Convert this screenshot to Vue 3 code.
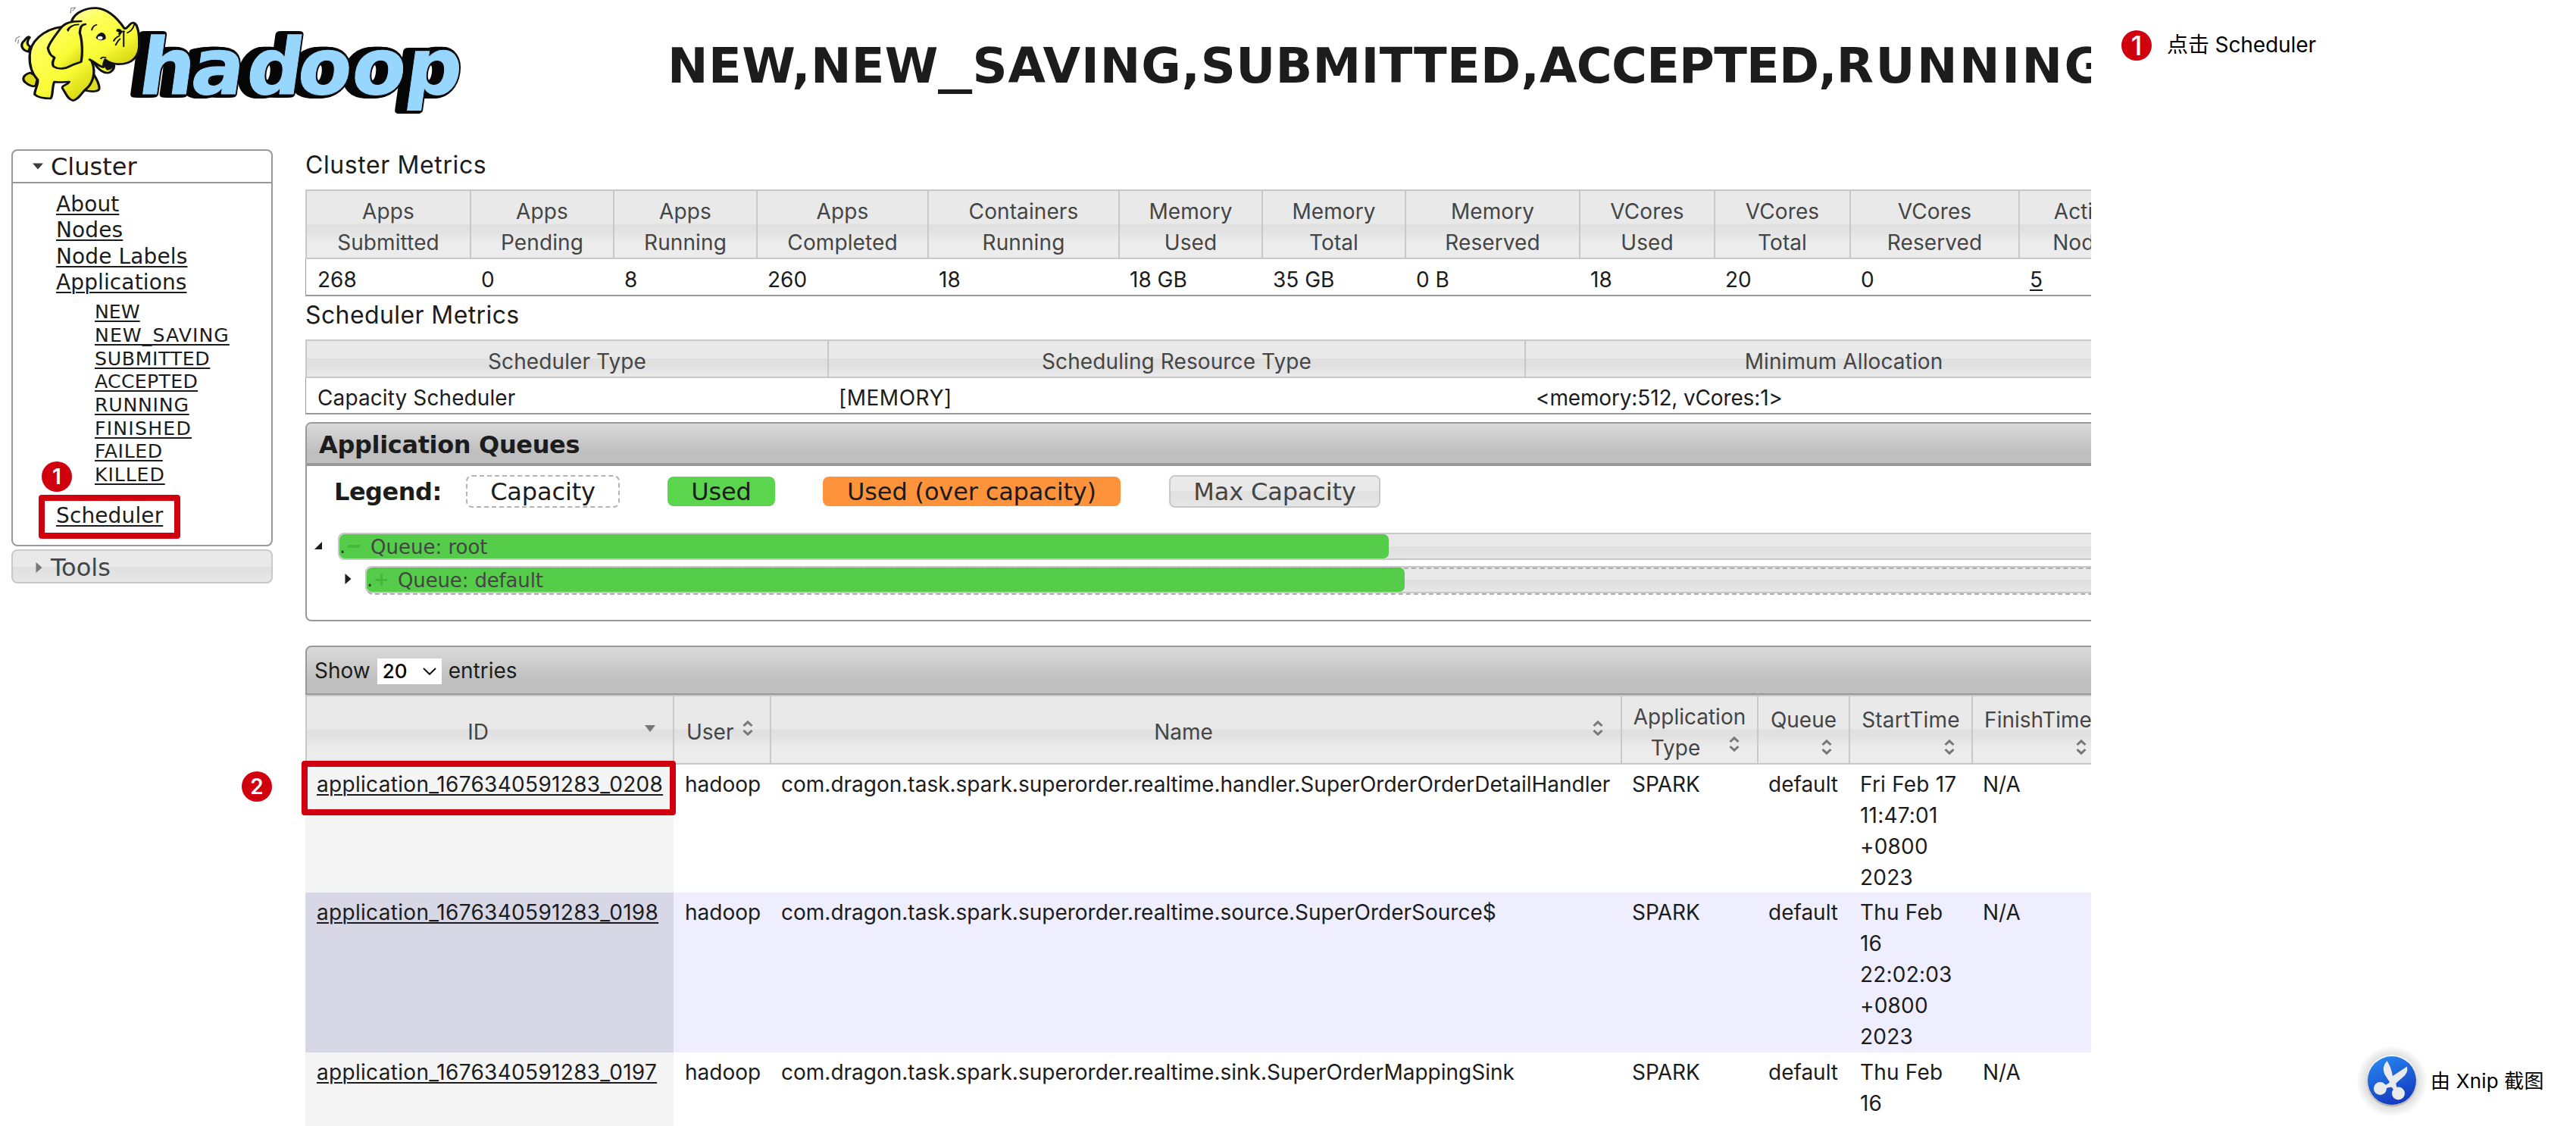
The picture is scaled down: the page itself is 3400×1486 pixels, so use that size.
<script setup>
const titleParts = [
  { text: 'NEW,', spacing: 0.5 },
  { text: 'NEW', spacing: 0.2 },
  { text: '_', spacing: 0, wide: true },
  { text: 'SAVING,', spacing: 0.9 },
  { text: 'SUBMITTED,', spacing: 0.3 },
  { text: 'ACCEPTED,', spacing: -0.8 },
  { text: 'RUNNING', spacing: 2.5 },
]

const clusterLinks = ['About', 'Nodes', 'Node Labels', 'Applications']

const stateLinks = [
  { label: 'NEW', spacing: 0 },
  { label: 'NEW_SAVING', spacing: 1.05 },
  { label: 'SUBMITTED', spacing: 0.65 },
  { label: 'ACCEPTED', spacing: 0.3 },
  { label: 'RUNNING', spacing: 0.75 },
  { label: 'FINISHED', spacing: 1.2 },
  { label: 'FAILED', spacing: 0.6 },
  { label: 'KILLED', spacing: 0.9 },
]

const metrics = [
  { head: ['Apps', 'Submitted'], value: '268', width: 217 },
  { head: ['Apps', 'Pending'], value: '0', width: 189 },
  { head: ['Apps', 'Running'], value: '8', width: 189 },
  { head: ['Apps', 'Completed'], value: '260', width: 226 },
  { head: ['Containers', 'Running'], value: '18', width: 252 },
  { head: ['Memory', 'Used'], value: '18 GB', width: 189 },
  { head: ['Memory', 'Total'], value: '35 GB', width: 189 },
  { head: ['Memory', 'Reserved'], value: '0 B', width: 230 },
  { head: ['VCores', 'Used'], value: '18', width: 178 },
  { head: ['VCores', 'Total'], value: '20', width: 179 },
  { head: ['VCores', 'Reserved'], value: '0', width: 223 },
  { head: ['Active', 'Nodes'], value: '5', width: 175, link: true },
]

const scheduler = [
  { head: 'Scheduler Type', value: 'Capacity Scheduler', width: 689, spacing: 0.1 },
  { head: 'Scheduling Resource Type', value: '[MEMORY]', width: 920, spacing: 0.5 },
  { head: 'Minimum Allocation', value: '<memory:512, vCores:1>', width: 841, spacing: -0.15 },
]

const apps = [
  {
    id: 'application_1676340591283_0208',
    name: 'com.dragon.task.spark.superorder.realtime.handler.SuperOrderOrderDetailHandler',
    start: ['Fri Feb 17', '11:47:01', '+0800', '2023'],
    height: 169,
  },
  {
    id: 'application_1676340591283_0198',
    name: 'com.dragon.task.spark.superorder.realtime.source.SuperOrderSource$',
    start: ['Thu Feb', '16', '22:02:03', '+0800', '2023'],
    height: 211,
  },
  {
    id: 'application_1676340591283_0197',
    name: 'com.dragon.task.spark.superorder.realtime.sink.SuperOrderMappingSink',
    start: ['Thu Feb', '16'],
    height: 211,
  },
]
</script>

<template>
  <div class="page">
    <div class="shot">
      <header class="top">
        <svg class="logo" width="640" height="160" viewBox="0 0 1568 480" preserveAspectRatio="none">
          <defs>
            <linearGradient id="skin" x1="0" y1="0" x2="0.7" y2="1">
              <stop offset="0" stop-color="#ffffb0" />
              <stop offset="0.3" stop-color="#fdff58" />
              <stop offset="0.7" stop-color="#f8fc36" />
              <stop offset="1" stop-color="#d8d614" />
            </linearGradient>
          </defs>
          <g transform="scale(2.45 3)">
            <g transform="translate(0 124.3) skewX(-8)" class="wordmark">
              <text v-for="n in 6" :key="n" class="shade" :x="[180, 249, 322, 389.500, 461, 532].map(v => v - n * 2).join(' ')" y="0">hadoop</text>
              <text class="face" x="180 249 322 389.500 461 532" y="0">hadoop</text>
            </g>
          </g>
          <g stroke="#111" stroke-width="8" stroke-linejoin="round" stroke-linecap="round" fill="url(#skin)">
            <path d="M92 205C70 198 64 176 78 162C84 152 92 140 96 148C88 160 84 176 98 184Z" />
            <path d="M98 288C74 296 68 316 86 330C94 338 108 346 116 338L122 305Z" fill="#dedc20" />
            <path d="M298 285C308 305 322 328 321 350C320 364 296 364 276 358L285 330Z" fill="#dedc20" />
            <path d="M200 106C140 116 97 165 96 220C94 262 104 292 122 316C124 335 112 355 112 374C124 388 146 390 164 390C172 380 168 340 176 324C190 328 212 324 224 324C216 340 198 336 202 350C212 366 218 394 236 398C258 392 262 366 284 346C302 322 308 285 300 255L262 120Z" />
            <path d="M305 250C318 276 340 296 356 286C370 276 371 264 368 250L340 232Z" />
            <path stroke="none" d="M222 84L262 245L200 240Z" />
            <path d="M232 82C244 46 282 30 312 32C352 36 384 80 402 112C407 118 416 100 424 93C434 86 442 96 444 110C450 130 450 145 450 165C454 228 424 256 380 254C362 252 350 246 340 236C336 246 334 256 334 266C318 262 310 248 290 236" />
            <path d="M340 238C352 250 358 248 368 252C368 268 356 278 346 276C338 266 336 254 340 238Z" fill="#111" stroke-width="3" />
            <path d="M262 84C226 84 208 92 196 112C178 142 160 168 155 190C158 210 166 222 176 228C172 240 166 252 174 264C190 276 212 272 226 262C240 252 252 250 262 245C268 216 266 158 258 130C260 108 262 98 276 96" />
          </g>
          <g fill="none" stroke="#111" stroke-linecap="round" stroke-width="5">
            <path d="M218 118Q228 98 254 97M220 122Q224 108 236 102M297 118Q300 102 312 98M378 122Q388 126 402 124M400 124V184M368 162Q372 150 386 142M374 178Q380 162 388 154M326 232Q330 224 342 228M412 130Q428 122 434 98" />
            <path d="M228 52L230 32L244 30M235 42L244 30M50 165L52 152L64 144M58 172L60 158" stroke="#888" stroke-width="3" />
          </g>
          <path d="M310 150Q314 134 328 128Q344 132 342 154Q328 164 316 156Z" fill="#111" />
          <ellipse cx="324" cy="150" rx="8" ry="7" fill="#fff" />
          <path d="M376 116Q390 110 396 126L388 140Q380 138 384 128Z" fill="#111" />
        </svg>
        <h1><span v-for="(p, i) in titleParts" :key="i" :class="{ wide: p.wide }" :style="{ letterSpacing: p.spacing + 'px' }">{{ p.text }}</span></h1>
      </header>

      <div class="columns">
        <nav class="side">
          <section class="box">
            <div class="boxhead">
              <svg width="14" height="9" viewBox="0 0 14 9"><path d="M0 0.500H14L7 8.500Z" fill="#3c3c3c" /></svg>
              <span>Cluster</span>
            </div>
            <ul class="links">
              <li v-for="l in clusterLinks" :key="l"><a>{{ l }}</a></li>
            </ul>
            <ul class="states">
              <li v-for="s in stateLinks" :key="s.label">
                <a :style="{ letterSpacing: s.spacing + 'px' }">{{ s.label }}</a>
              </li>
            </ul>
            <ul class="links last"><li><a>Scheduler</a></li></ul>
          </section>
          <section class="tools">
            <svg width="9" height="14" viewBox="0 0 9 14"><path d="M0.500 0V14L8.500 7Z" fill="#777" /></svg>
            <span>Tools</span>
          </section>
        </nav>

        <main class="main">
          <h2 class="first">Cluster Metrics</h2>
          <div class="table t1">
            <div class="row head">
              <div v-for="(m, i) in metrics" :key="i" class="cell" :style="{ width: m.width + 'px' }">
                <div v-for="h in m.head" :key="h">{{ h }}</div>
              </div>
            </div>
            <div class="row body">
              <div v-for="(m, i) in metrics" :key="i" class="cell" :style="{ width: m.width + 'px' }">
                <a v-if="m.link">{{ m.value }}</a>
                <template v-else>{{ m.value }}</template>
              </div>
            </div>
          </div>

          <h2 class="second">Scheduler Metrics</h2>
          <div class="table t2">
            <div class="row head">
              <div v-for="s in scheduler" :key="s.head" class="cell" :style="{ width: s.width + 'px' }">{{ s.head }}</div>
            </div>
            <div class="row body">
              <div v-for="s in scheduler" :key="s.head" class="cell" :style="{ width: s.width + 'px', letterSpacing: s.spacing + 'px' }">{{ s.value }}</div>
            </div>
          </div>

          <section class="queues">
            <h3>Application Queues</h3>
            <div class="legend">
              <b>Legend:</b>
              <span class="tag cap">Capacity</span>
              <span class="tag used">Used</span>
              <span class="tag over">Used (over capacity)</span>
              <span class="tag max">Max Capacity</span>
            </div>
            <div class="queue root">
              <svg width="10" height="10" viewBox="0 0 10 10"><path d="M10 0V10H0Z" fill="#1c1c1c" /></svg>
              <div class="bar"><div class="fill"><i>.</i><em class="minus"></em><span>Queue: root</span></div></div>
            </div>
            <div class="queue child">
              <svg width="9" height="14" viewBox="0 0 9 14"><path d="M0.500 0V14L8.500 7Z" fill="#1c1c1c" /></svg>
              <div class="bar"><div class="dash"></div><div class="fill"><i>.</i><em class="plus"></em><span>Queue: default</span></div></div>
            </div>
          </section>

          <section class="apps">
            <div class="toolbar">
              <span>Show</span>
              <div class="select"><b>20</b><svg width="18" height="10" viewBox="0 0 18 10"><path d="M1 1L9 8.800L17 1" fill="none" stroke="#111" stroke-width="2" /></svg></div>
              <span>entries</span>
            </div>
            <div class="apphead">
              <div class="h id"><span>ID</span><svg width="14" height="9" viewBox="0 0 14 9"><path d="M0 0H14L7 9Z" fill="#777" /></svg></div>
              <div class="h user"><span>User</span><svg class="sort" viewBox="0 0 14 20"><path d="M1.500 7L7 1.800L12.500 7M1.500 13L7 18.200L12.500 13" /></svg></div>
              <div class="h name"><span>Name</span><svg class="sort" viewBox="0 0 14 20"><path d="M1.500 7L7 1.800L12.500 7M1.500 13L7 18.200L12.500 13" /></svg></div>
              <div class="h type">
                <div>Application</div>
                <div class="second-line"><span>Type</span><svg class="sort" viewBox="0 0 14 20"><path d="M1.500 7L7 1.800L12.500 7M1.500 13L7 18.200L12.500 13" /></svg></div>
              </div>
              <div v-for="h in ['Queue', 'StartTime', 'FinishTime']" :key="h" class="h stacked" :class="h.toLowerCase()">
                <span>{{ h }}</span><svg class="sort" viewBox="0 0 14 20"><path d="M1.500 7L7 1.800L12.500 7M1.500 13L7 18.200L12.500 13" /></svg>
              </div>
            </div>
            <div v-for="(a, i) in apps" :key="a.id" class="approw" :class="{ even: i % 2 }" :style="{ height: a.height + 'px' }">
              <div class="c id"><a>{{ a.id }}</a></div>
              <div class="c user">hadoop</div>
              <div class="c name">{{ a.name }}</div>
              <div class="c type">SPARK</div>
              <div class="c queue-c">default</div>
              <div class="c start"><div v-for="s in a.start" :key="s">{{ s }}</div></div>
              <div class="c finish">N/A</div>
            </div>
          </section>
        </main>
      </div>
    </div>

    <aside class="notes">
      <div class="note"><span class="dot">1</span><span>点击 Scheduler</span></div>
      <div class="credit">
        <svg width="96" height="96" viewBox="0 0 96 96">
          <defs>
            <linearGradient id="blue" x1="0.3" y1="0" x2="0.7" y2="1">
              <stop offset="0" stop-color="#2585ee" />
              <stop offset="1" stop-color="#1436bd" />
            </linearGradient>
            <radialGradient id="halo">
              <stop offset="0.6" stop-color="#000" stop-opacity="0.18" />
              <stop offset="1" stop-color="#000" stop-opacity="0" />
            </radialGradient>
            <linearGradient id="rim" x1="0" y1="0" x2="0" y2="1">
              <stop offset="0" stop-color="#fff" />
              <stop offset="1" stop-color="#b5b5b5" />
            </linearGradient>
          </defs>
          <circle cx="48" cy="49" r="47" fill="url(#halo)" />
          <circle cx="48" cy="48.500" r="34" fill="url(#rim)" />
          <circle cx="48" cy="48" r="32" fill="url(#blue)" />
          <g fill="#e9eaec">
            <path d="M41.500 22Q34 30 38.500 40L45 50Q42 54 36 54L38 60Q44 56 48 57L52 63L58 61Q53 57 53.500 51.500L62 44Q70 38 68 29.500L49 42Q47 30 41.500 22Z" />
            <circle cx="32.500" cy="58.500" r="8.500" />
            <circle cx="56.500" cy="65" r="8.500" />
          </g>
        </svg>
        <span>由 Xnip 截图</span>
      </div>
    </aside>

    <!-- step annotations laid over the console -->
    <div class="frame frame-a"></div>
    <span class="dot dot-a">1</span>
    <div class="frame frame-b"></div>
    <span class="dot dot-b">2</span>
  </div>
</template>

<style>
body { margin: 0; background: #fff; }
</style>

<style scoped>
* { box-sizing: border-box; }
.page {
  position: relative;
  display: flex;
  width: 3400px;
  height: 1486px;
  overflow: hidden;
  background: #fff;
  color: #1c1c1c;
  font: 28px/41px Inter, "Liberation Sans", "Noto Sans CJK SC", sans-serif;
}
.shot { width: 2760px; height: 1486px; overflow: hidden; flex: none; }
a { text-decoration: underline; text-decoration-thickness: 2px; text-underline-offset: 3px; }
ul { list-style: none; margin: 0; padding: 0; }

.top { height: 197px; display: flex; white-space: nowrap; }
.logo { flex: none; display: block; }
.wordmark text { font: bold 103px "DejaVu Sans", sans-serif; }
.shade { fill: #060606; stroke: #060606; stroke-width: 9px; stroke-linejoin: round; }
.face { fill: #97d6ff; stroke: #97d6ff; stroke-width: 1px; }
h1 {
  margin: 50px 0 0 241px;
  font: bold 64px/74px "DejaVu Sans", sans-serif;
}
/* the underscore is as broad as a capital letter */
h1 .wide { display: inline-block; width: 45px; transform: scaleX(1.41); transform-origin: 0 0; }

.columns { display: flex; }
.side { width: 345px; margin: 0 43px 0 15px; flex: none; font-family: "DejaVu Sans", sans-serif; }
.box { height: 524px; border: 2px solid #999; border-radius: 8px; }
.boxhead {
  display: flex; align-items: center; gap: 10px;
  height: 43px; padding: 1px 0 0 26px;
  border-bottom: 2px solid #999; font-size: 32px; line-height: 37px;
}
.boxhead svg { margin-top: -2px; }
.links { padding: 11px 0 0 57px; font-size: 28px; line-height: 34.300px; letter-spacing: 0.12px; }
.states { padding: 7px 0 0 108px; font-size: 25.200px; line-height: 30.700px; }
.links.last { padding-top: 21px; }
.tools {
  display: flex; align-items: center; gap: 11px;
  height: 45px; margin-top: 4px; padding: 2px 0 0 30px;
  border: 2px solid #c8c8c8; border-radius: 8px;
  font-size: 32px; line-height: 40px; color: #454545;
  background: linear-gradient(#e9e9e9 50%, #dfdfdf 51%, #e6e6e6 90%);
}

.main { width: 2357px; overflow: hidden; flex: none; white-space: nowrap; }
h2 { margin: 0; font-size: 32px; font-weight: 400; line-height: 41px; letter-spacing: 0.6px; }
h2.first { height: 53px; }
h2.second { height: 57px; padding-top: 4px; letter-spacing: 0.4px; }

.table { width: 2600px; border-left: 1px solid #999; border-bottom: 2px solid #999; }
.row { display: flex; margin-left: -1px; }
.cell { flex: none; }
.head { border: 2px solid #c8c8c8; border-width: 2px 0; text-align: center; color: #454545; }
.head .cell { border-left: 2px solid #c8c8c8; padding-top: 7px; }
.body .cell { padding-left: 15px; }
.body .cell:first-child { padding-left: 16px; }
.t1 .head { height: 92px; letter-spacing: 0.1px; background: linear-gradient(#e9e9e9 49%, #dfdfdf 50%, #e2e2e2 60%, #ececec 78%); }
.t1 .body { height: 47px; padding-top: 7px; }
.t2 .head { height: 51px; letter-spacing: 0.1px; background: linear-gradient(#e9e9e9 49%, #dfdfdf 50%, #e0e0e0 70%, #e9e9e9 95%); }
.t2 .body { height: 46px; padding-top: 6px; }

.queues {
  width: 2600px; height: 263px; margin-top: 10px;
  border: 2px solid #999; border-radius: 8px;
  font-family: "DejaVu Sans", sans-serif;
}
h3 {
  margin: 0; height: 56px; padding-left: 16px;
  border-bottom: 4px solid #999; border-radius: 6px 0 0 0;
  background: linear-gradient(#dadada, #bfbfbf 72%);
  font: bold 32px/56px "DejaVu Sans", sans-serif; letter-spacing: -0.35px;
}
.legend { display: flex; align-items: center; height: 43px; margin: 12px 0 0 36px; font-size: 32px; letter-spacing: -0.15px; }
.legend b { width: 174px; letter-spacing: -0.5px; padding-top: 2px; }
.tag { height: 39px; line-height: 41px; text-align: center; border-radius: 8px; flex: none; }
.cap { width: 203px; height: 43px; border: 2px dashed #b3b3b3; margin-right: 63px; }
.used { width: 142px; background: #5bd44e; margin-right: 63px; }
.over { width: 393px; background: #ff933c; margin-right: 64px; }
.max { width: 279px; height: 43px; border: 2px solid #c8c8c8; color: #454545; background: linear-gradient(#e9e9e9 49%, #dfdfdf 51%, #e6e6e6); }
.queue { display: flex; align-items: center; height: 36px; font-size: 26px; color: #454545; }
.root { margin: 33px 0 0 10px; }
.root .bar { margin-left: 21px; }
.root svg { margin-top: -2px; }
.child { margin: 8px 0 0 50px; }
.child .bar { margin-left: 18px; }
.child svg { margin-top: -2px; }
.bar {
  position: relative; flex: none; width: 2400px; height: 36px;
  border: 2px solid #c8c8c8; border-radius: 8px;
  background: linear-gradient(#e9e9e9 49%, #dfdfdf 51%, #e6e6e6);
}
.dash { position: absolute; inset: 0 0 -4px 0; border: 2px dashed #b0b0b0; border-radius: 8px; }
.fill { position: relative; display: flex; align-items: center; width: 1385px; height: 32px; border-radius: 7px; background: rgba(70, 202, 56, 0.9); line-height: 32px; }
.child .fill { width: 1370px; }
.fill i { width: 11px; font-style: normal; color: #333; }
.fill em { width: 16px; height: 16px; margin-right: 14px; }
.fill span { padding-top: 2px; }
.child .fill span { letter-spacing: -0.15px; }
.minus { background: linear-gradient(#45b83a, #45b83a) center / 16px 4px no-repeat; }
.plus { background: linear-gradient(#45b83a, #45b83a) center / 16px 3px no-repeat, linear-gradient(#45b83a, #45b83a) center / 3px 16px no-repeat; }

.apps { margin-top: 32px; width: 2700px; }
.toolbar {
  display: flex; align-items: center; height: 65px; padding: 0 0 0 10px;
  border: 2px solid #999; border-radius: 8px 0 0 0;
  background: linear-gradient(#dadada, #bfbfbf 72%);
}
.toolbar span { padding-top: 1px; }
.select {
  display: flex; align-items: center; justify-content: space-between;
  width: 85px; height: 34px; margin: 2px 9px 0 9px; padding: 0 7px; background: #fff; color: #000;
}
.select b { font-weight: 500; font-size: 26px; }
.apphead {
  display: flex; height: 92px; color: #454545;
  border: 2px solid #c8c8c8; border-width: 2px 0;
  background: linear-gradient(#e9e9e9 49%, #dfdfdf 50%, #e2e2e2 60%, #ececec 78%);
}
.h { display: flex; flex: none; border-left: 2px solid #c8c8c8; }
.h span { padding-top: 27px; }
.sort { width: 14px; height: 20px; margin-top: 32px; flex: none; fill: none; stroke: #777; stroke-width: 3; }
.id { width: 485px; }
.user { width: 128px; }
.name { width: 1123px; }
.type { width: 180px; }
.queue, .queue-c { flex: none; }
.queue-c { width: 121px; }
.h.id { padding: 0 23px 0 6px; }
.h.id span, .h.name span { flex: 1; text-align: center; }
.h.id svg { margin-top: 38px; }
.h.user { padding-left: 16px; gap: 12px; }
.h.name { padding: 0 23px 0 4px; }
.h.type { flex-direction: column; padding-top: 7px; text-align: center; }
.second-line { display: flex; padding-right: 23px; }
.second-line span { flex: 1; padding: 0; }
.second-line .sort { margin-top: 5px; }
.stacked { display: block; height: 88px; text-align: center; }
.stacked span { display: block; padding-top: 11px; }
.stacked .sort { display: block; margin: 5px 22px 0 auto; }
.h.queue { width: 121px; font-size: 28px; }
.starttime { width: 162px; letter-spacing: 0.2px; }
.finishtime { width: 174px; }
.approw { display: flex; overflow: hidden; }
.even { background: #eeeeff; }
.c { flex: none; padding: 6px 0 0 15px; }
.c.id { width: 486px; background: #f4f4f4; letter-spacing: 0.31px; }
.c.user { width: 127px; }
.even .c.id { background: #d7d7e5; }
.c.start { width: 162px; letter-spacing: 0.2px; }

.notes { display: flex; flex-direction: column; justify-content: space-between; width: 640px; color: #000; }
.note { display: flex; align-items: center; gap: 20px; margin: 39px 0 0 40px; font-size: 28px; letter-spacing: -0.1px; }
.dot {
  display: block; width: 40px; height: 40px; border-radius: 50%;
  background: #d0000e; color: #fff; text-align: center;
  font-weight: 500; font-size: 32px; line-height: 41px; letter-spacing: 0;
}
.note .dot { font-size: 35px; }
.credit { display: flex; align-items: center; gap: 3px; margin: 0 0 12px 349px; font-size: 26px; letter-spacing: 0.2px; }
.credit span { padding-top: 1px; }
.frame { position: absolute; border: 8px solid #d0000e; border-radius: 4px; }
.frame-a { left: 51px; top: 653px; width: 187px; height: 58px; }
.frame-b { left: 398px; top: 1004px; width: 494px; height: 72px; }
.dot-a, .dot-b { position: absolute; font-size: 28px; font-weight: 600; }
.dot-a { left: 55px; top: 609px; }
.dot-b { left: 319px; top: 1018px; }
</style>
